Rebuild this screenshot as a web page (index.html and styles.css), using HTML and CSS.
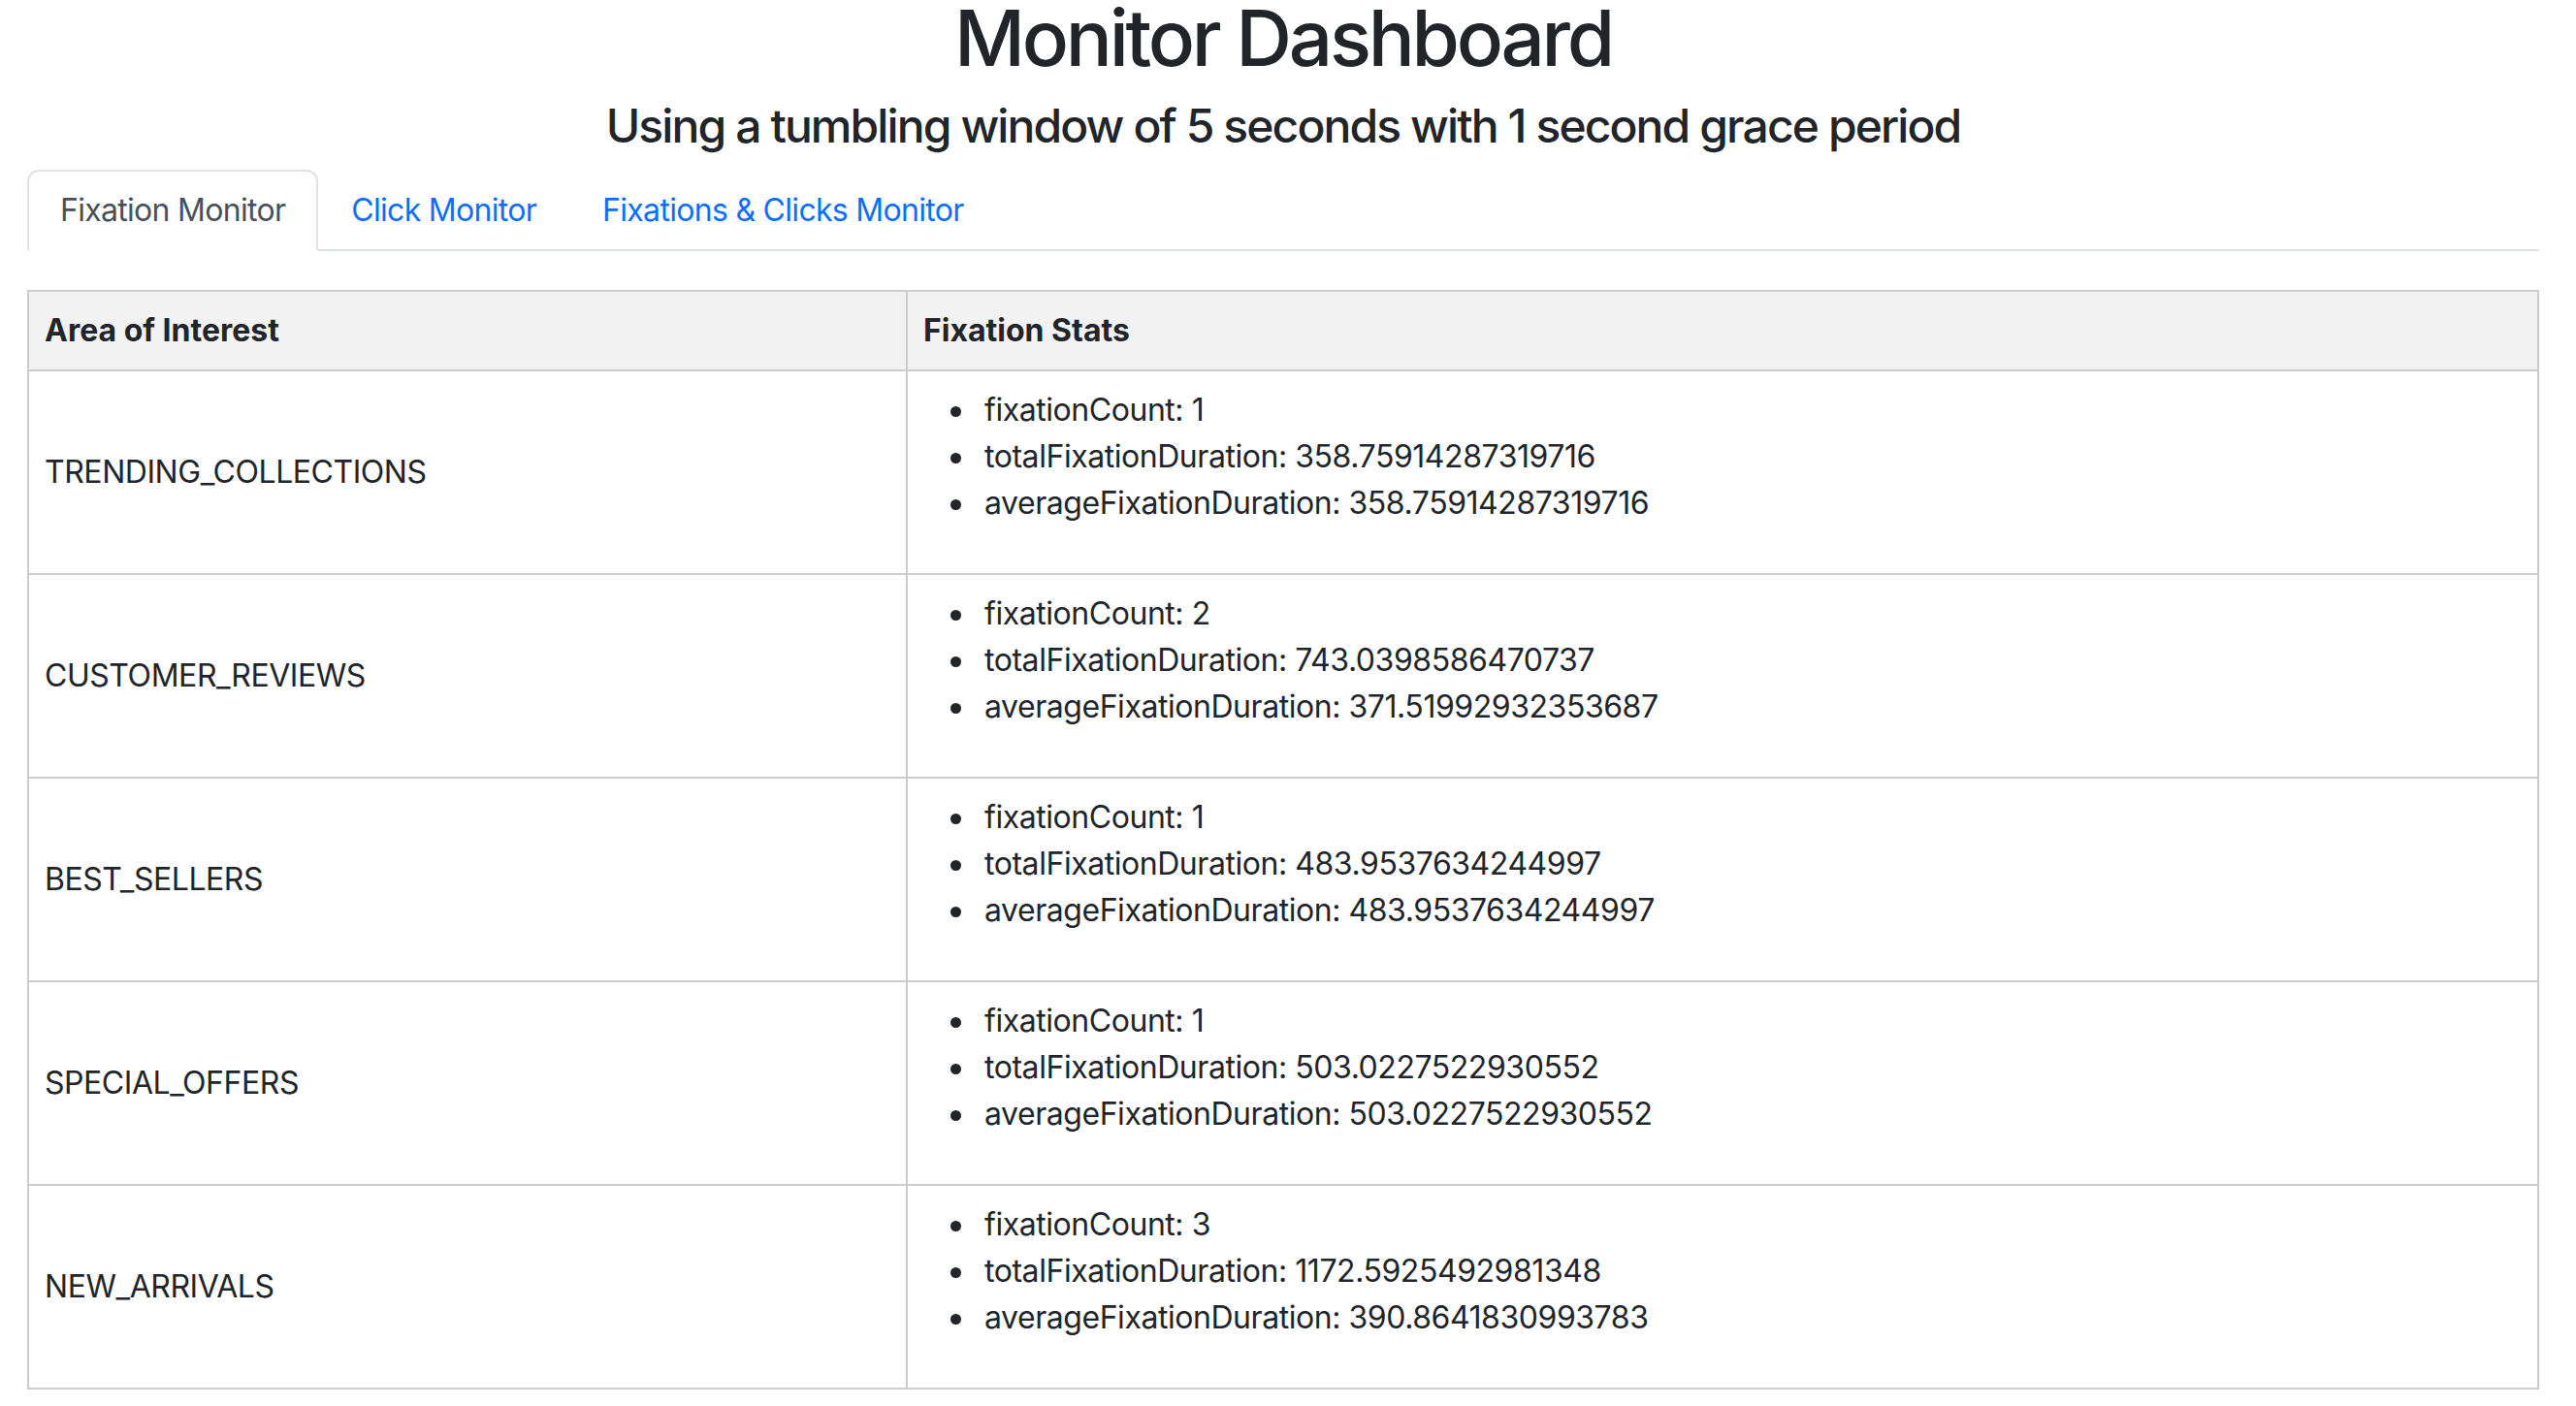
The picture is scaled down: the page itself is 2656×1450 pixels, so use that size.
FILE: index.html
```html
<!DOCTYPE html>
<html lang="en">
<head>
<meta charset="utf-8">
<title>Monitor Dashboard</title>
<link rel="stylesheet" href="styles.css">
</head>
<body>
<div class="page">
  <h1 class="title">Monitor Dashboard</h1>
  <h4 class="subtitle">Using a tumbling window of 5 seconds with 1 second grace period</h4>
  <ul class="tabs">
    <li class="tab"><a class="tab-link active">Fixation Monitor</a></li>
    <li class="tab"><a class="tab-link">Click Monitor</a></li>
    <li class="tab"><a class="tab-link">Fixations &amp; Clicks Monitor</a></li>
  </ul>
  <table class="stats">
    <colgroup><col class="col-area"><col></colgroup>
    <thead>
      <tr><th>Area of Interest</th><th>Fixation Stats</th></tr>
    </thead>
    <tbody>
      <tr>
        <td>TRENDING_COLLECTIONS</td>
        <td><ul class="stat-list">
          <li>fixationCount: 1</li>
          <li>totalFixationDuration: 358.75914287319716</li>
          <li>averageFixationDuration: 358.75914287319716</li>
        </ul></td>
      </tr>
      <tr>
        <td>CUSTOMER_REVIEWS</td>
        <td><ul class="stat-list">
          <li>fixationCount: 2</li>
          <li>totalFixationDuration: 743.0398586470737</li>
          <li>averageFixationDuration: 371.51992932353687</li>
        </ul></td>
      </tr>
      <tr>
        <td>BEST_SELLERS</td>
        <td><ul class="stat-list">
          <li>fixationCount: 1</li>
          <li>totalFixationDuration: 483.9537634244997</li>
          <li>averageFixationDuration: 483.9537634244997</li>
        </ul></td>
      </tr>
      <tr>
        <td>SPECIAL_OFFERS</td>
        <td><ul class="stat-list">
          <li>fixationCount: 1</li>
          <li>totalFixationDuration: 503.0227522930552</li>
          <li>averageFixationDuration: 503.0227522930552</li>
        </ul></td>
      </tr>
      <tr>
        <td>NEW_ARRIVALS</td>
        <td><ul class="stat-list">
          <li>fixationCount: 3</li>
          <li>totalFixationDuration: 1172.5925492981348</li>
          <li>averageFixationDuration: 390.8641830993783</li>
        </ul></td>
      </tr>
    </tbody>
  </table>
</div>
</body>
</html>
```

FILE: styles.css
```css
html, body {
  margin: 0;
  padding: 0;
  background: #ffffff;
}
body {
  font-family: Inter, "Noto Sans", "Liberation Sans", sans-serif;
  font-size: 32px;
  line-height: 1.5;
  color: #212529;
}
.page {
  padding: 0 38px 0 28px;
}
.title {
  font-size: 80px;
  font-weight: 500;
  line-height: 78px;
  letter-spacing: -3.3px;
  text-align: center;
  margin: 0 0 23px;
}
.subtitle {
  font-size: 48px;
  font-weight: 500;
  line-height: 1.2;
  letter-spacing: -1.9px;
  text-align: center;
  margin: 0 0 16px;
}
.tabs {
  display: flex;
  list-style: none;
  margin: 0;
  padding: 0;
  border-bottom: 2px solid #dee2e6;
}
.tab {
  margin-bottom: -2px;
}
.tab-link {
  display: block;
  padding: 16px 32px;
  border: 2px solid transparent;
  border-top-left-radius: 12px;
  border-top-right-radius: 12px;
  color: #0d6efd;
  letter-spacing: -0.7px;
  cursor: pointer;
}
.tab-link.active {
  color: #495057;
  background: #ffffff;
  border-color: #dee2e6 #dee2e6 #ffffff;
}
.stats {
  width: 100%;
  margin-top: 40px;
  border-collapse: collapse;
  border: 2px solid #cccccc;
}
.col-area {
  width: 906px;
}
.stats th,
.stats td {
  border: 2px solid #cccccc;
  padding: 16px;
  text-align: left;
  vertical-align: middle;
}
.stats td {
  letter-spacing: -0.45px;
}
.stats th {
  background: #f2f2f2;
  font-weight: 700;
}
.stat-list {
  list-style: none;
  margin: 0 0 32px;
  padding-left: 28px;
}
.stat-list li::before {
  content: "";
  display: inline-block;
  width: 11px;
  height: 11px;
  border-radius: 50%;
  background: #212529;
  margin-right: 24px;
  vertical-align: middle;
}
```
